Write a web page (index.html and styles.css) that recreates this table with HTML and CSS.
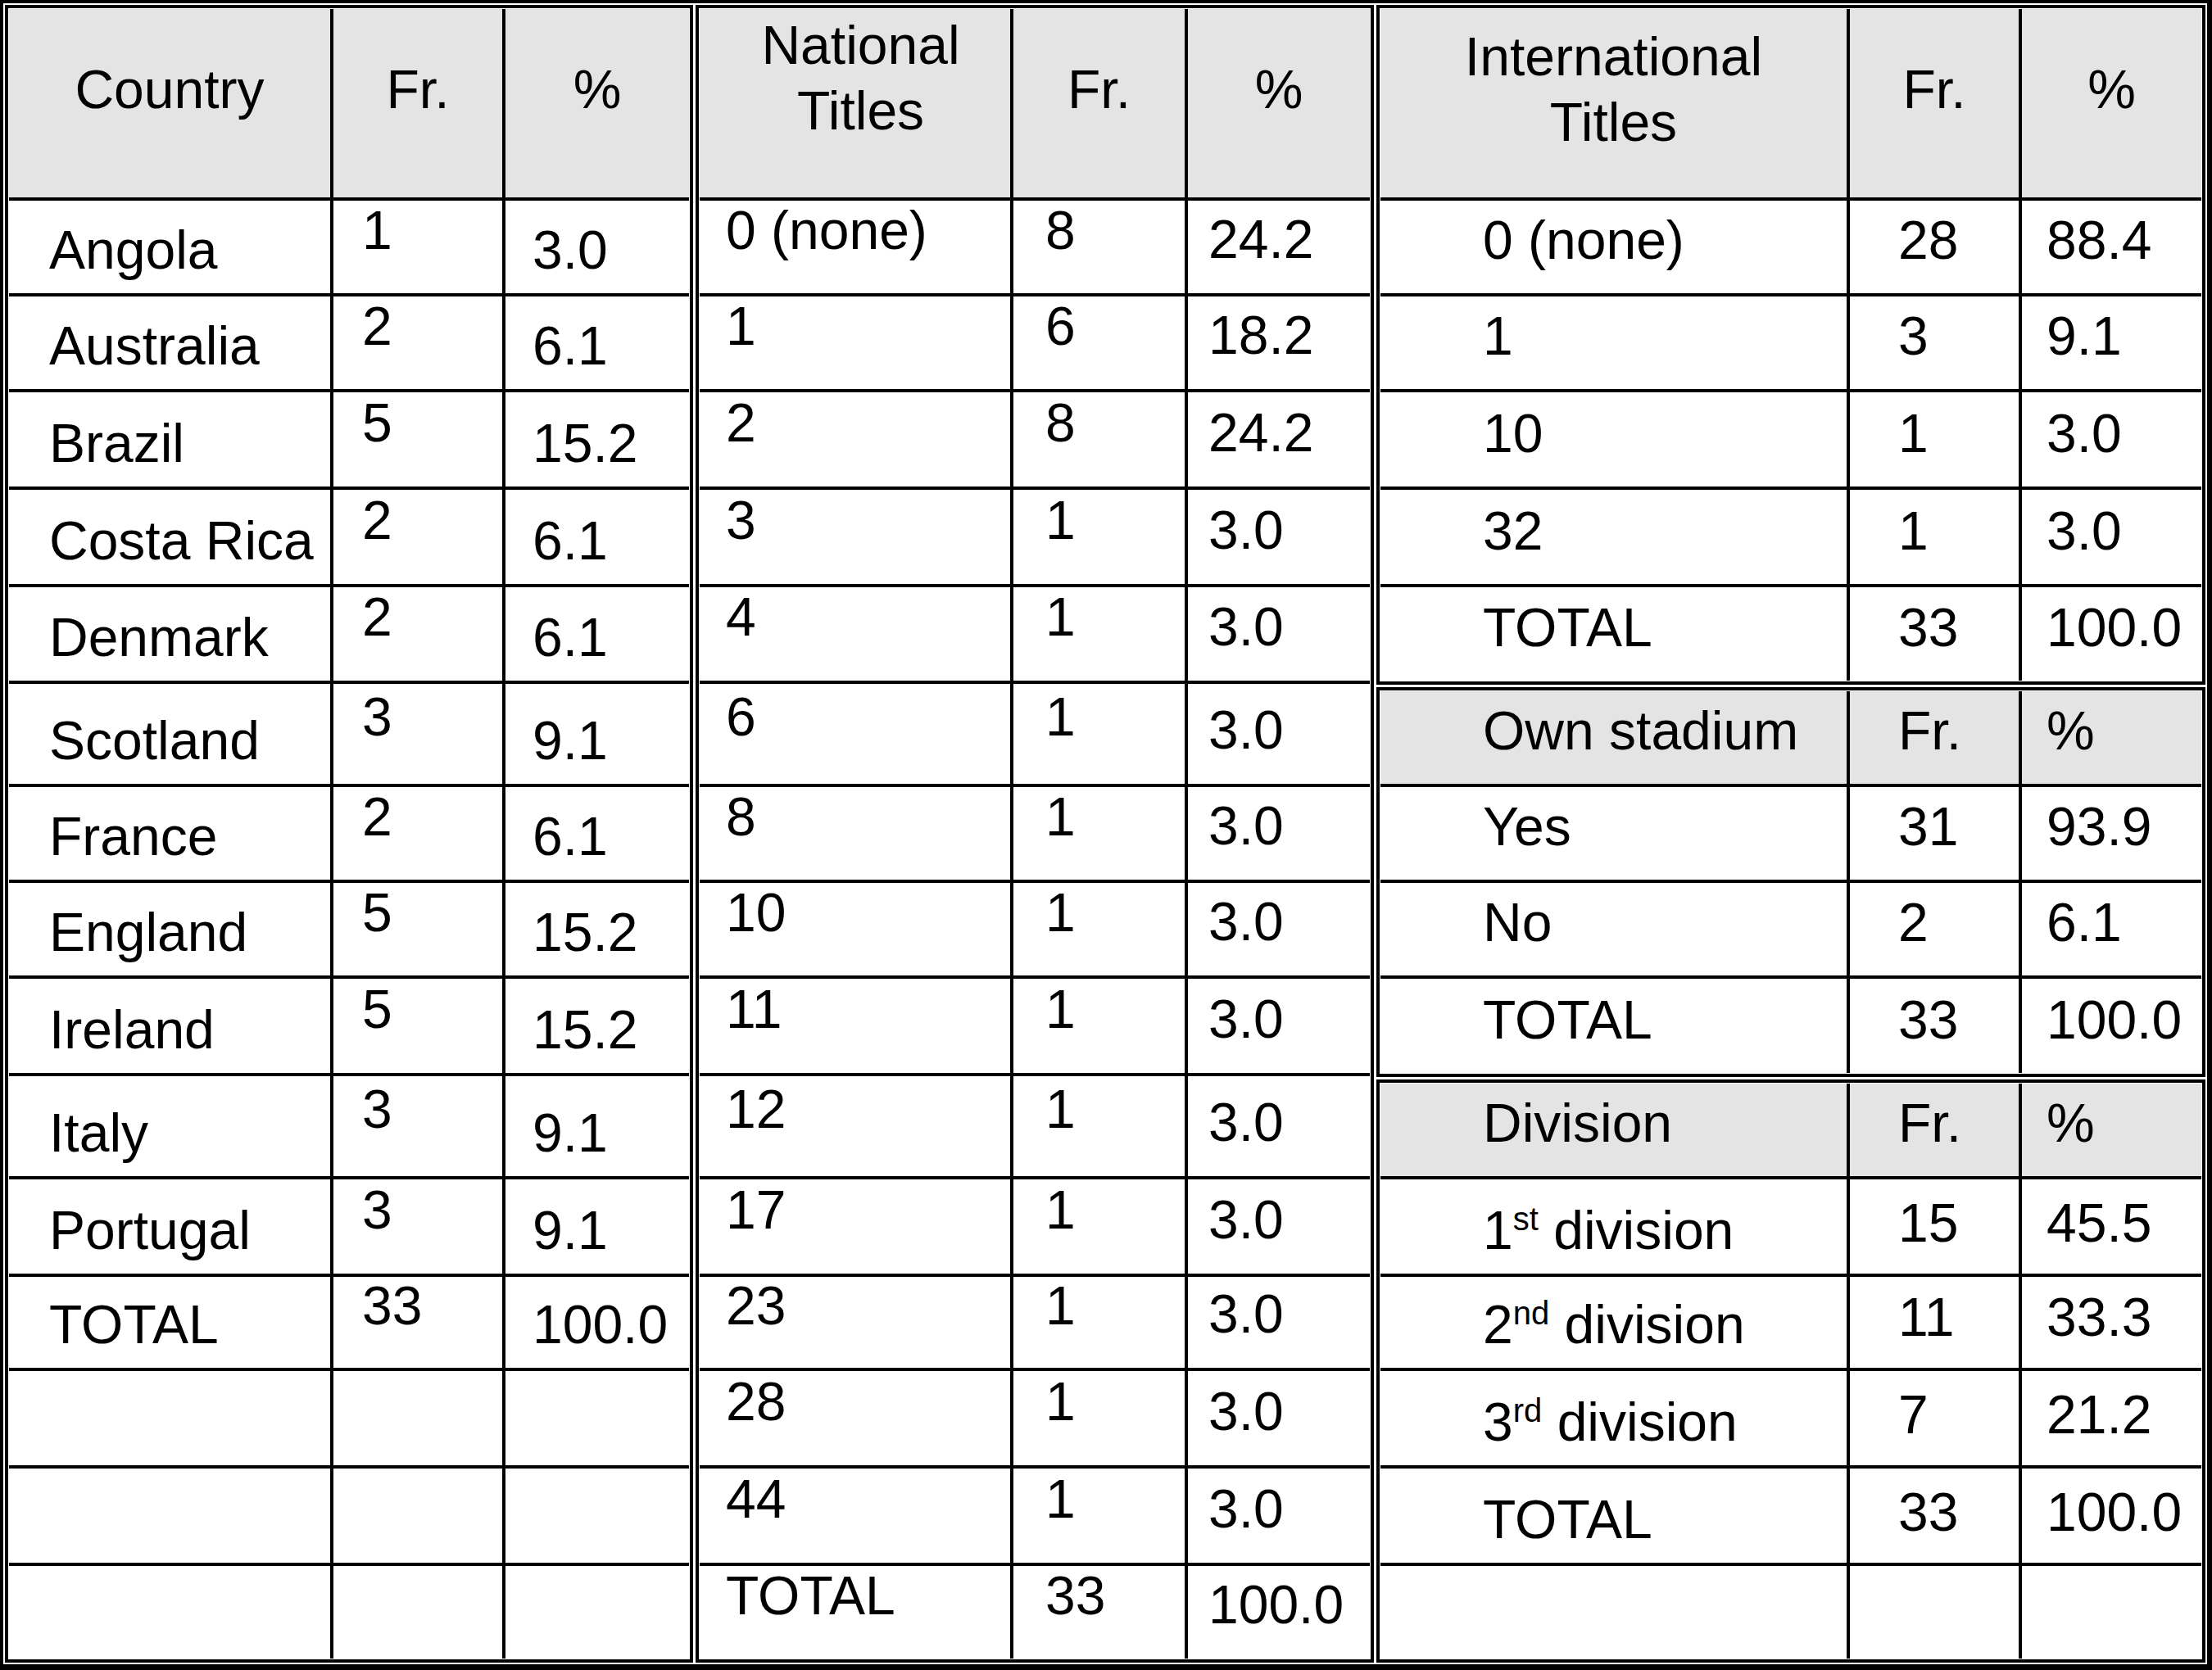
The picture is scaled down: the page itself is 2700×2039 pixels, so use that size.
FILE: index.html
```html
<!DOCTYPE html>
<html lang="en">
<head>
<meta charset="utf-8">
<title>Club statistics</title>
<link rel="stylesheet" href="styles.css">
</head>
<body>
<div class="frame">
  <div class="tbl country">
    <div class="grid">
      <div class="c hd">Country</div><div class="c hd">Fr.</div><div class="c hd">%</div>
      <div class="c name">Angola</div><div class="c fr">1</div><div class="c pct">3.0</div>
      <div class="c name">Australia</div><div class="c fr">2</div><div class="c pct">6.1</div>
      <div class="c name">Brazil</div><div class="c fr">5</div><div class="c pct">15.2</div>
      <div class="c name">Costa Rica</div><div class="c fr">2</div><div class="c pct">6.1</div>
      <div class="c name">Denmark</div><div class="c fr">2</div><div class="c pct">6.1</div>
      <div class="c name">Scotland</div><div class="c fr">3</div><div class="c pct">9.1</div>
      <div class="c name">France</div><div class="c fr">2</div><div class="c pct">6.1</div>
      <div class="c name">England</div><div class="c fr">5</div><div class="c pct">15.2</div>
      <div class="c name">Ireland</div><div class="c fr">5</div><div class="c pct">15.2</div>
      <div class="c name">Italy</div><div class="c fr">3</div><div class="c pct">9.1</div>
      <div class="c name">Portugal</div><div class="c fr">3</div><div class="c pct">9.1</div>
      <div class="c name">TOTAL</div><div class="c fr">33</div><div class="c pct">100.0</div>
      <div class="c"></div><div class="c"></div><div class="c"></div>
      <div class="c"></div><div class="c"></div><div class="c"></div>
      <div class="c"></div><div class="c"></div><div class="c"></div>
    </div>
  </div>

  <div class="tbl national">
    <div class="grid">
      <div class="c hd hd-nat">National<br>Titles</div><div class="c hd">Fr.</div><div class="c hd">%</div>
      <div class="c name">0 (none)</div><div class="c fr">8</div><div class="c pct">24.2</div>
      <div class="c name">1</div><div class="c fr">6</div><div class="c pct">18.2</div>
      <div class="c name">2</div><div class="c fr">8</div><div class="c pct">24.2</div>
      <div class="c name">3</div><div class="c fr">1</div><div class="c pct">3.0</div>
      <div class="c name">4</div><div class="c fr">1</div><div class="c pct">3.0</div>
      <div class="c name">6</div><div class="c fr">1</div><div class="c pct">3.0</div>
      <div class="c name">8</div><div class="c fr">1</div><div class="c pct">3.0</div>
      <div class="c name">10</div><div class="c fr">1</div><div class="c pct">3.0</div>
      <div class="c name">11</div><div class="c fr">1</div><div class="c pct">3.0</div>
      <div class="c name">12</div><div class="c fr">1</div><div class="c pct">3.0</div>
      <div class="c name">17</div><div class="c fr">1</div><div class="c pct">3.0</div>
      <div class="c name">23</div><div class="c fr">1</div><div class="c pct">3.0</div>
      <div class="c name">28</div><div class="c fr">1</div><div class="c pct">3.0</div>
      <div class="c name">44</div><div class="c fr">1</div><div class="c pct">3.0</div>
      <div class="c name">TOTAL</div><div class="c fr">33</div><div class="c pct">100.0</div>
    </div>
  </div>

  <div class="stack">
    <div class="tbl right intl">
      <div class="grid">
        <div class="c hd hd-intl">International<br>Titles</div><div class="c hd">Fr.</div><div class="c hd">%</div>
        <div class="c name">0 (none)</div><div class="c fr">28</div><div class="c pct">88.4</div>
        <div class="c name">1</div><div class="c fr">3</div><div class="c pct">9.1</div>
        <div class="c name">10</div><div class="c fr">1</div><div class="c pct">3.0</div>
        <div class="c name">32</div><div class="c fr">1</div><div class="c pct">3.0</div>
        <div class="c name">TOTAL</div><div class="c fr">33</div><div class="c pct">100.0</div>
      </div>
    </div>
    <div class="tbl right stadium">
      <div class="grid">
        <div class="c sub name">Own stadium</div><div class="c sub fr">Fr.</div><div class="c sub pct">%</div>
        <div class="c name">Yes</div><div class="c fr">31</div><div class="c pct">93.9</div>
        <div class="c name">No</div><div class="c fr">2</div><div class="c pct">6.1</div>
        <div class="c name">TOTAL</div><div class="c fr">33</div><div class="c pct">100.0</div>
      </div>
    </div>
    <div class="tbl right division">
      <div class="grid">
        <div class="c sub name">Division</div><div class="c sub fr">Fr.</div><div class="c sub pct">%</div>
        <div class="c name"><span class="txt">1<sup class="ord">st</sup> division</span></div><div class="c fr">15</div><div class="c pct">45.5</div>
        <div class="c name"><span class="txt">2<sup class="ord">nd</sup> division</span></div><div class="c fr">11</div><div class="c pct">33.3</div>
        <div class="c name"><span class="txt">3<sup class="ord">rd</sup> division</span></div><div class="c fr">7</div><div class="c pct">21.2</div>
        <div class="c name">TOTAL</div><div class="c fr">33</div><div class="c pct">100.0</div>
        <div class="c"></div><div class="c"></div><div class="c"></div>
      </div>
    </div>
  </div>
</div>
</body>
</html>
```

FILE: styles.css
```css
html, body {
  margin: 0;
  padding: 0;
  background: #fff;
}

body {
  font-family: "Liberation Sans", Arial, Helvetica, sans-serif;
  font-size: 66px;
  color: #000;
}

.frame {
  display: flex;
  align-items: flex-start;
  gap: 3px;
  width: max-content;
  padding: 2px;
  background: #fff;
  border: 4px solid #000;
  border-right-width: 6px;
  border-bottom-width: 7px;
}

.stack {
  display: flex;
  flex-direction: column;
  gap: 3px;
}

.tbl {
  border: 4px solid #000;
  padding: 1px;
  background: #fff;
}

.grid {
  display: grid;
  gap: 4px;
  background: #000;
}

.country .grid {
  grid-template-columns: 392px 206px 224px;
  grid-template-rows: 230px 113px 113px 115px 115px 114px 122px 113px 113px 115px 122px 115px 111px 115px 115px 113px;
}

.national .grid {
  grid-template-columns: 379px 209px 222px;
  grid-template-rows: 230px 113px 113px 115px 115px 114px 122px 113px 113px 115px 122px 115px 111px 115px 115px 113px;
}

.right .grid {
  grid-template-columns: 569px 206px 219px;
}

.intl .grid {
  grid-template-rows: 230px 113px 113px 115px 115px 114px;
}

.stadium .grid {
  grid-template-rows: 113px 113px 113px 115px;
}

.division .grid {
  grid-template-rows: 113px 115px 111px 115px 115px 113px;
}

.c {
  display: flex;
  box-sizing: border-box;
  background: #fff;
  line-height: 66px;
  white-space: nowrap;
  min-width: 0;
}

.txt {
  display: block;
  line-height: 66px;
}

/* top header cells */
.hd {
  background: #e4e4e4;
  justify-content: center;
  align-items: flex-start;
  text-align: center;
  line-height: 80px;
  padding-top: 58px;
}

.hd-nat {
  padding-top: 4px;
  padding-left: 14px;
}

.hd-intl {
  padding-top: 18px;
}

/* sub-table header rows */
.sub {
  background: #e4e4e4;
}

/* Country table */
.country .name {
  padding-left: 49px;
  align-items: flex-end;
  padding-bottom: 20px;
}

.country .fr {
  padding-left: 35px;
  align-items: center;
  padding-bottom: 42px;
}

.country .pct {
  padding-left: 33px;
  align-items: flex-end;
  padding-bottom: 20px;
}

/* National titles table */
.national .name {
  padding-left: 32px;
  align-items: center;
  padding-bottom: 42px;
}

.national .fr {
  padding-left: 39px;
  align-items: center;
  padding-bottom: 42px;
}

.national .pct {
  padding-left: 25px;
  align-items: flex-end;
  padding-bottom: 33px;
}

/* right-hand tables */
.right .name {
  padding-left: 125px;
  align-items: flex-end;
  padding-bottom: 32px;
}

.right .fr {
  padding-left: 59px;
  align-items: flex-end;
  padding-bottom: 32px;
}

.right .pct {
  padding-left: 30px;
  align-items: flex-end;
  padding-bottom: 32px;
}

.division .c.name:not(.sub) {
  padding-bottom: 20px;
}

.division .c.fr:not(.sub),
.division .c.pct:not(.sub) {
  padding-bottom: 29px;
}

.ord {
  font-size: 40px;
  line-height: 0;
  vertical-align: 23px;
}
```
